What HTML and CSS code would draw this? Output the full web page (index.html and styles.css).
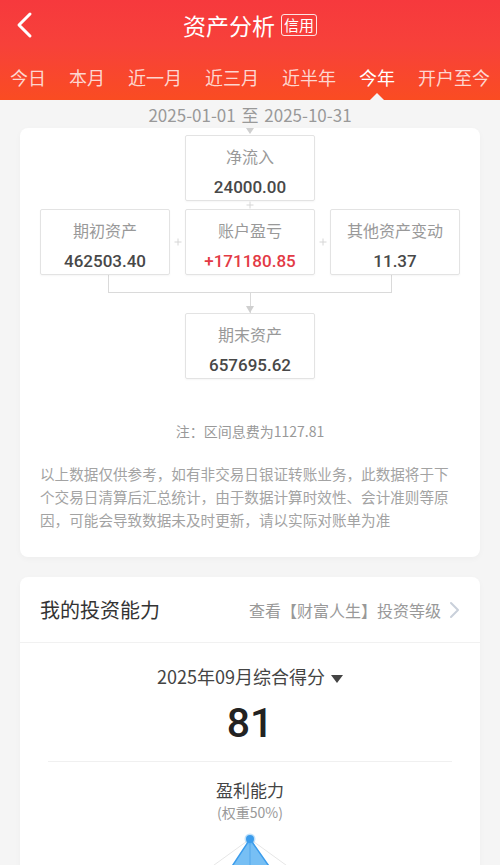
FILE: index.html
```html
<!DOCTYPE html>
<html lang="zh-CN">
<head>
  <meta charset="UTF-8" />
  <meta name="viewport" content="width=device-width, initial-scale=1.0"/>
  <title>资产分析</title>
  <link rel="stylesheet" href="styles.css">
</head>
<body>
  <div class="header">
    <div class="topbar">
      <svg class="back" width="20" height="28" viewBox="0 0 20 28">
        <polyline points="15,3 4,14 15,25" fill="none" stroke="#fff" stroke-width="3" stroke-linecap="round" stroke-linejoin="round"/>
      </svg>
      <div class="title">资产分析<span class="badge">信用</span></div>
    </div>
    <div class="tabs">
      <span class="tab">今日</span>
      <span class="tab">本月</span>
      <span class="tab">近一月</span>
      <span class="tab">近三月</span>
      <span class="tab">近半年</span>
      <span class="tab active">今年</span>
      <span class="tab">开户至今</span>
    </div>
  </div>

  <div class="date-range">2025-01-01 至 2025-10-31</div>

  <div class="card">
    <div class="flow">
      <div class="arrow-in"></div>
      <div class="flow-row">
        <div class="box">
          <div class="box-label">净流入</div>
          <div class="box-value">24000.00</div>
        </div>
      </div>
      <div class="plus-v">
        <svg width="8" height="8" viewBox="0 0 8 8"><path d="M4 0.5V7.5M0.5 4H7.5" stroke="#d6d6d6" stroke-width="1"/></svg>
      </div>
      <div class="flow-row">
        <div class="box">
          <div class="box-label">期初资产</div>
          <div class="box-value">462503.40</div>
        </div>
        <div class="plus-h">
          <svg width="8" height="8" viewBox="0 0 8 8"><path d="M4 0.5V7.5M0.5 4H7.5" stroke="#d6d6d6" stroke-width="1"/></svg>
        </div>
        <div class="box">
          <div class="box-label">账户盈亏</div>
          <div class="box-value red">+171180.85</div>
        </div>
        <div class="plus-h">
          <svg width="8" height="8" viewBox="0 0 8 8"><path d="M4 0.5V7.5M0.5 4H7.5" stroke="#d6d6d6" stroke-width="1"/></svg>
        </div>
        <div class="box">
          <div class="box-label">其他资产变动</div>
          <div class="box-value">11.37</div>
        </div>
      </div>
      <div class="connector"></div>
      <div class="stem"></div>
      <div class="flow-row">
        <div class="box">
          <div class="box-label">期末资产</div>
          <div class="box-value">657695.62</div>
        </div>
      </div>
    </div>

    <div class="note">注：区间息费为1127.81</div>
    <p class="disclaimer">以上数据仅供参考，如有非交易日银证转账业务，此数据将于下个交易日清算后汇总统计，由于数据计算时效性、会计准则等原因，可能会导致数据未及时更新，请以实际对账单为准</p>
  </div>

  <div class="card ability">
    <div class="ability-head">
      <div class="ability-title">我的投资能力</div>
      <div class="ability-link">
        查看【财富人生】投资等级
        <svg width="12" height="20" viewBox="0 0 12 20">
          <polyline points="3,3 10,10 3,17" fill="none" stroke="#c9d0da" stroke-width="2" stroke-linecap="round" stroke-linejoin="round"/>
        </svg>
      </div>
    </div>
    <div class="score">
      <div class="score-month">2025年09月综合得分<span class="caret"></span></div>
      <div class="score-value">81</div>
      <div class="score-divider"></div>
      <div class="dim-name">盈利能力</div>
      <div class="dim-weight">(权重50%)</div>
      <svg class="radar" width="220" height="60" viewBox="0 0 220 60">
        <polygon points="110,8 195.6,70 162.7,170 57.3,170 24.4,70" fill="none" stroke="#e6e6e6" stroke-width="1"/>
        <polygon points="110,8 161,81 140,140 82,138 60,84" fill="#4aa9f0" fill-opacity="0.75" stroke="#3b9cec" stroke-width="1.5"/>
        <line x1="110" y1="8" x2="110" y2="100" stroke="#2f8fe0" stroke-width="1" stroke-opacity="0.5"/>
        <circle cx="110" cy="8" r="5.5" fill="#4aa9f0" fill-opacity="0.35"/>
        <circle cx="110" cy="8" r="4" fill="#3b9cec"/>
      </svg>
    </div>
  </div>
</body>
</html>
```

FILE: styles.css
```css
body {
  font-family: "Noto Sans CJK SC", "Noto Sans", sans-serif;
  background-color: #f5f5f5;
  margin: 0;
  padding: 0;
  overflow: hidden;
  height: 865px;
}

.header {
  background: linear-gradient(180deg, #f6393d 0%, #f7413a 45%, #fa4c22 100%);
  color: white;
  height: 100px;
}

.topbar {
  height: 50px;
  display: flex;
  align-items: center;
  justify-content: center;
  position: relative;
}

.back {
  position: absolute;
  left: 15px;
  top: 11px;
}

.title {
  font-size: 23px;
  display: flex;
  align-items: center;
}

.badge {
  font-size: 15px;
  line-height: 20px;
  border: 1px solid rgba(255,255,255,0.85);
  border-radius: 3px;
  padding: 0 2px;
  margin-left: 6px;
}

.tabs {
  height: 50px;
  box-sizing: border-box;
  padding: 4px 10px 0;
  display: flex;
  align-items: center;
  justify-content: space-between;
}

.tab {
  font-size: 18px;
  color: rgba(255,255,255,0.78);
  position: relative;
  line-height: 46px;
}

.tab.active {
  color: white;
}

.tab.active::after {
  content: "";
  position: absolute;
  left: 50%;
  bottom: 0;
  margin-left: -7px;
  border-left: 7px solid transparent;
  border-right: 7px solid transparent;
  border-bottom: 7px solid #f5f5f5;
}

.date-range {
  height: 27px;
  box-sizing: border-box;
  padding-top: 2px;
  line-height: 25px;
  text-align: center;
  font-size: 17px;
  color: #999;
  word-spacing: 2px;
}

.card {
  background-color: white;
  margin: 0 20px;
  border-radius: 8px;
  box-shadow: 0 2px 6px rgba(0,0,0,0.03);
}

.flow {
  padding: 0 20px;
}

.arrow-in {
  width: 0;
  margin: 1px auto 1px;
  border-left: 4px solid transparent;
  border-right: 4px solid transparent;
  border-top: 6px solid #cfcfcf;
}

.flow-row {
  display: flex;
  justify-content: center;
}

.box {
  width: 130px;
  height: 66px;
  box-sizing: border-box;
  border: 1px solid #e3e3e3;
  border-radius: 2px;
  box-shadow: 0 1px 2px rgba(0,0,0,0.04);
  text-align: center;
  padding-top: 8px;
}

.box-label {
  font-size: 16px;
  line-height: 24px;
  color: #999;
}

.box-value {
  font-family: Roboto, "Noto Sans CJK SC", sans-serif;
  font-size: 17px;
  font-weight: 500;
  line-height: 26px;
  margin-top: 6px;
  color: #484848;
}

.box-value.red {
  color: #e33a45;
}

.plus-v {
  height: 8px;
  display: flex;
  justify-content: center;
}

.plus-v svg,
.plus-h svg {
  display: block;
}

.plus-h {
  width: 15px;
  display: flex;
  justify-content: center;
  align-items: center;
}

.connector {
  width: 284px;
  height: 18px;
  box-sizing: border-box;
  margin: 0 auto;
  border: 1px solid #dadada;
  border-top: none;
}

.stem {
  width: 1px;
  height: 20px;
  margin: 0 auto;
  background-color: #dadada;
  position: relative;
}

.stem::after {
  content: "";
  position: absolute;
  left: -4px;
  bottom: 0;
  border-left: 4.5px solid transparent;
  border-right: 4.5px solid transparent;
  border-top: 7px solid #cfcfcf;
}

.note {
  margin-top: 42px;
  text-align: center;
  font-size: 14px;
  line-height: 20px;
  color: #999;
}

.disclaimer {
  margin: 21px 0 0;
  padding: 0 20px 26px;
  font-size: 14.6px;
  line-height: 23px;
  color: #a3a3a3;
}

.ability {
  margin-top: 20px;
  border-radius: 8px 8px 0 0;
}

.ability-head {
  height: 66px;
  box-sizing: border-box;
  padding: 0 20px;
  display: flex;
  align-items: center;
  justify-content: space-between;
  border-bottom: 1px solid #f1f1f1;
}

.ability-title {
  font-size: 20px;
  color: #333;
}

.ability-link {
  display: flex;
  align-items: center;
  gap: 7px;
  font-size: 16px;
  color: #999;
}

.score {
  text-align: center;
  padding-top: 20px;
}

.score-month {
  font-size: 18px;
  line-height: 26px;
  color: #444;
}

.caret {
  display: inline-block;
  margin-left: 6px;
  vertical-align: middle;
  border-left: 6px solid transparent;
  border-right: 6px solid transparent;
  border-top: 8px solid #444;
}

.score-value {
  margin-top: 10px;
  font-family: Roboto, sans-serif;
  font-size: 41px;
  font-weight: 500;
  line-height: 48px;
  color: #222;
}

.score-divider {
  margin: 14px 28px 0;
  height: 1px;
  background-color: #f0f0f0;
}

.dim-name {
  margin-top: 15px;
  font-size: 17px;
  line-height: 25px;
  color: #444;
}

.dim-weight {
  font-size: 14px;
  line-height: 21px;
  color: #999;
}

.radar {
  display: block;
  margin: 8px auto 0;
}
```
